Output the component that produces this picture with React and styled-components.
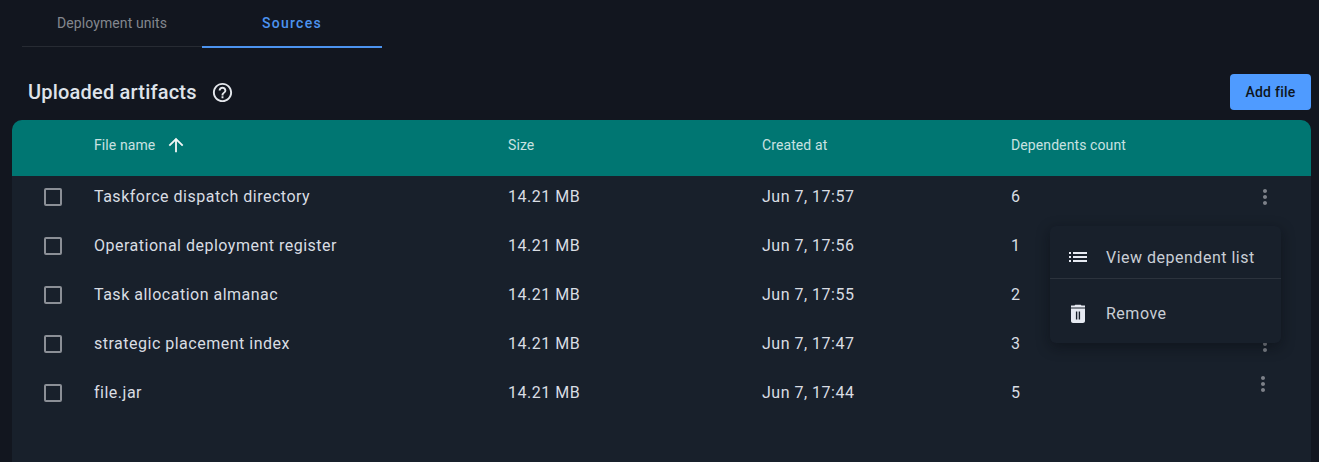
import React from 'react';
import styled, { createGlobalStyle } from 'styled-components';
import { MdArrowUpward, MdHelpOutline, MdList, MdMoreVert } from 'react-icons/md';

const GlobalStyle = createGlobalStyle`
    html, body {
        margin: 0;
        height: 100%;
        background: #12161f;
        overflow: hidden;
    }
    body {
        font-family: Roboto, "Liberation Sans", sans-serif;
    }
`;

const Page = styled.div`
    height: 462px;
    padding: 0 8px 0 12px;
    box-sizing: border-box;
    display: flex;
    flex-direction: column;
`;

const Tabs = styled.div`
    display: flex;
    margin-left: 10px;
    height: 48px;
`;

const Tab = styled.div`
    width: 180px;
    box-sizing: border-box;
    padding-top: 15px;
    text-align: center;
    font-size: 14px;
    line-height: 16px;
    letter-spacing: ${props => props.active ? '1.25px' : '0.1px'};
    font-weight: ${props => props.active ? 500 : 400};
    color: ${props => props.active ? '#4c93ef' : '#83878e'};
    border-bottom: ${props => props.active ? '2px solid #4c93ef' : '1px solid #272b33'};
    height: ${props => props.active ? '48px' : '47px'};
`;

const TitleBar = styled.div`
    display: flex;
    align-items: center;
    justify-content: space-between;
    height: 36px;
    margin-top: 26px;
    margin-bottom: 10px;
    padding-left: 16px;
`;

const TitleGroup = styled.div`
    display: flex;
    align-items: center;
    gap: 14px;
`;

const Title = styled.h2`
    margin: 0;
    font-size: 20px;
    line-height: 24px;
    font-weight: 500;
    letter-spacing: 0.2px;
    color: #dfe3ea;
`;

const HelpIcon = styled(MdHelpOutline)`
    font-size: 23px;
    color: #e4e7ec;
`;

const AddButton = styled.button`
    width: 81px;
    height: 36px;
    border: 0;
    border-radius: 4px;
    background: #4f9bff;
    color: #0e1520;
    font-family: inherit;
    font-size: 14px;
    font-weight: 500;
    letter-spacing: 0.25px;
    padding: 0;
`;

const Panel = styled.div`
    flex: 1;
    position: relative;
    background: #18202b;
    border-radius: 10px 10px 0 0;
    overflow: hidden;
`;

const columns = '82px 414px 254px 249px 1fr 46px';

const HeaderRow = styled.div`
    display: grid;
    grid-template-columns: ${columns};
    align-items: center;
    height: 56px;
    padding-bottom: 6px;
    box-sizing: border-box;
    background: #007672;
    color: #c9e2e1;
    font-size: 14px;
    letter-spacing: 0.1px;
`;

const SortCell = styled.div`
    display: flex;
    align-items: center;
    gap: 10px;
    grid-column: 2;
`;

const SortIcon = styled(MdArrowUpward)`
    font-size: 22px;
    color: #f1f6f6;
`;

const Rows = styled.div`
    display: flex;
    flex-direction: column;
    gap: 7px;
`;

const Row = styled.div`
    display: grid;
    grid-template-columns: ${columns};
    align-items: center;
    height: 42px;
    color: #d9dde3;
    font-size: 16px;
    letter-spacing: 0.5px;
`;

const Cell = styled.div`
    margin-bottom: 2px;
`;

const CheckCell = styled.div`
    padding-left: 32px;
    display: flex;
`;

const Checkbox = styled.span`
    width: 18px;
    height: 18px;
    box-sizing: border-box;
    border: 2px solid #8b8f96;
    border-radius: 2px;
`;

const Kebab = styled(MdMoreVert)`
    font-size: 24px;
    color: #7d8189;
    justify-self: start;
    position: relative;
    left: ${props => props.$shifted ? '-14px' : '-12px'};
    top: ${props => props.$shifted ? '-9px' : '0'};
`;

const Menu = styled.div`
    position: absolute;
    left: 1038px;
    top: 106px;
    width: 231px;
    height: 117px;
    background: #18202b;
    border-radius: 6px;
    box-shadow: 0 4px 14px rgba(6, 9, 14, 0.45);
    color: #c9ced6;
    font-size: 16px;
    letter-spacing: 0.5px;
`;

const MenuItem = styled.div`
    display: flex;
    align-items: center;
    height: ${props => props.divided ? '53px' : '64px'};
    box-sizing: border-box;
    padding: ${props => props.divided ? '10px 0 0 16px' : '5px 0 0 16px'};
    gap: 16px;
    border-bottom: ${props => props.divided ? '1px solid #2c333d' : '0'};
`;

const MenuIconBox = styled.span`
    width: 24px;
    height: 24px;
    color: #e6eaf2;
    display: flex;
    align-items: center;
    justify-content: center;
    font-size: 24px;
`;

function TrashIcon() {
    return (
        <svg width="24" height="24" viewBox="0 0 24 24" fill="currentColor">
            <path fillRule="evenodd" d="M15.5 3.5l-.8-.8H9.3l-.8.8H5v2h14v-2h-3.5zM5 6.5V19c0 1.2.9 2 2 2h10c1.100 0 2-.8 2-2V6.500H5zm4.900 3h1.400v8H9.900v-8zm2.800 0h1.400v8h-1.400v-8z" />
        </svg>
    );
}

const files = [
    { name: 'Taskforce dispatch directory', created: 'Jun 7, 17:57', count: 6 },
    { name: 'Operational deployment register', created: 'Jun 7, 17:56', count: 1 },
    { name: 'Task allocation almanac', created: 'Jun 7, 17:55', count: 2 },
    { name: 'strategic placement index', created: 'Jun 7, 17:47', count: 3 },
    { name: 'file.jar', created: 'Jun 7, 17:44', count: 5 },
];

export default function App() {
    return (
        <Page>
            <GlobalStyle />
            <Tabs>
                <Tab>Deployment units</Tab>
                <Tab active>Sources</Tab>
            </Tabs>
            <TitleBar>
                <TitleGroup>
                    <Title>Uploaded artifacts</Title>
                    <HelpIcon />
                </TitleGroup>
                <AddButton>Add file</AddButton>
            </TitleBar>
            <Panel>
                <HeaderRow>
                    <SortCell>File name <SortIcon /></SortCell>
                    <div>Size</div>
                    <div>Created at</div>
                    <div>Dependents count</div>
                </HeaderRow>
                <Rows>
                    {files.map((file, idx) =>
                        <Row key={idx}>
                            <CheckCell><Checkbox /></CheckCell>
                            <Cell>{file.name}</Cell>
                            <Cell>14.21 MB</Cell>
                            <Cell>{file.created}</Cell>
                            <Cell>{file.count}</Cell>
                            <Kebab $shifted={idx === files.length - 1} />
                        </Row>)}
                </Rows>
                <Menu>
                    <MenuItem divided>
                        <MenuIconBox><MdList /></MenuIconBox>
                        View dependent list
                    </MenuItem>
                    <MenuItem>
                        <MenuIconBox><TrashIcon /></MenuIconBox>
                        Remove
                    </MenuItem>
                </Menu>
            </Panel>
        </Page>
    );
}
